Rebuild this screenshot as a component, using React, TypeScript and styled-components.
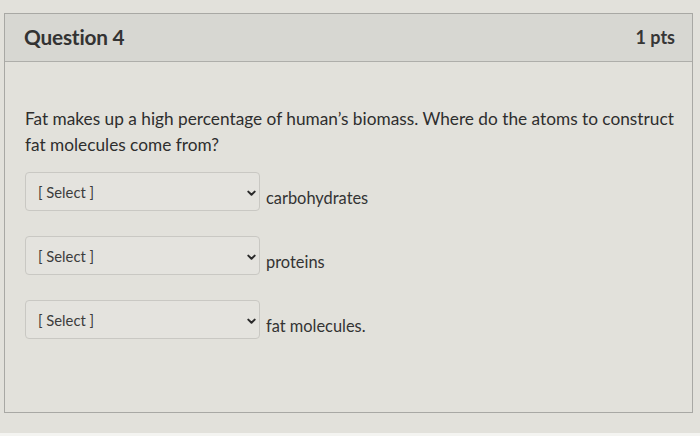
import React from "react";
import styled, { createGlobalStyle } from "styled-components";

const Global = createGlobalStyle`
  html, body { margin: 0; padding: 0; }
  body {
    width: 700px;
    height: 436px;
    overflow: hidden;
    background: #e2e1db;
    font-family: Lato, "Liberation Sans", sans-serif;
    color: #2f2f2f;
  }
`;

const Page = styled.div`
  height: 436px;
  padding: 13px 7px 0 4px;
  box-sizing: border-box;
  display: flex;
  flex-direction: column;
`;

const Card = styled.section`
  height: 400px;
  flex: none;
  box-sizing: border-box;
  border: 1px solid #a8a8a4;
  background: #e2e1db;
  display: flex;
  flex-direction: column;
`;

const Header = styled.header`
  height: 48px;
  flex: none;
  box-sizing: border-box;
  border-bottom: 1px solid #aeaeaa;
  background: #d7d7d2;
  display: flex;
  align-items: center;
  justify-content: space-between;
  padding: 0 17px 2px 19px;
`;

const Title = styled.h2`
  margin: 0;
  font-size: 20.8px;
  font-weight: 700;
  letter-spacing: -0.2px;
  color: #333;
`;

const Points = styled.span`
  font-size: 18px;
  font-weight: 700;
  color: #363636;
`;

const Body = styled.div`
  padding: 44px 8px 0 20px;
  display: flex;
  flex-direction: column;
`;

const Prompt = styled.p`
  margin: 0 0 14px 0;
  font-size: 17.25px;
  line-height: 26px;
  color: #2e2e2e;
`;

const Rows = styled.div`
  display: flex;
  flex-direction: column;
  gap: 25px;
`;

const Row = styled.div`
  display: flex;
  align-items: flex-start;
`;

const Select = styled.div`
  width: 235px;
  height: 39px;
  box-sizing: border-box;
  border: 1px solid #c9c8c3;
  border-radius: 4px;
  background: #e4e3de;
  display: flex;
  align-items: center;
  justify-content: space-between;
  padding: 0 3px 0 12px;
  font-size: 14.8px;
  color: #3c3c3c;
`;

const SelectText = styled.span`
  margin-top: 1px;
`;

const ChevronBox = styled.span`
  display: flex;
  margin-top: 3px;
`;

const Label = styled.span`
  margin: 16px 0 0 6px;
  font-size: 16.4px;
  color: #333;
`;

const Strip = styled.div`
  margin: auto -7px 0 -4px;
  height: 3px;
  background: #f4f4f1;
`;

const Chevron = () => (
  <ChevronBox>
    <svg width="9" height="7" viewBox="0 0 9 7">
      <path d="M1.3 1.6 L4.5 4.8 L7.7 1.6" fill="none" stroke="#2a2a2a" strokeWidth="2" strokeLinecap="round" strokeLinejoin="round" />
    </svg>
  </ChevronBox>
);

const answers = ["carbohydrates", "proteins", "fat molecules."];

export default function App() {
  return (
    <>
      <Global />
      <Page>
        <Card>
          <Header>
            <Title>Question 4</Title>
            <Points>1 pts</Points>
          </Header>
          <Body>
            <Prompt>
              Fat makes up a high percentage of human’s biomass. Where do the atoms to construct fat molecules come from?
            </Prompt>
            <Rows>
              {answers.map((a) => (
                <Row key={a}>
                  <Select>
                    <SelectText>[ Select ]</SelectText>
                    <Chevron />
                  </Select>
                  <Label>{a}</Label>
                </Row>
              ))}
            </Rows>
          </Body>
        </Card>
        <Strip />
      </Page>
    </>
  );
}
